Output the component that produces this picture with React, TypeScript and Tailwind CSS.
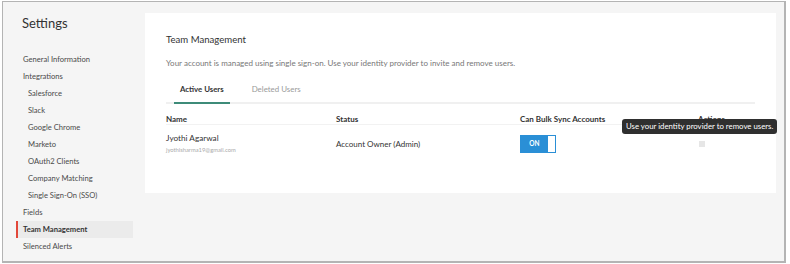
const menu: { label: string; sub?: boolean; active?: boolean }[] = [
  { label: "General Information" },
  { label: "Integrations" },
  { label: "Salesforce", sub: true },
  { label: "Slack", sub: true },
  { label: "Google Chrome", sub: true },
  { label: "Marketo", sub: true },
  { label: "OAuth2 Clients", sub: true },
  { label: "Company Matching", sub: true },
  { label: "Single Sign-On (SSO)", sub: true },
  { label: "Fields" },
  { label: "Team Management", active: true },
  { label: "Silenced Alerts" },
];

function Sidebar() {
  return (
    <div className="w-[142px] shrink-0 pl-[13px] pt-[13px]">
      <div className="ml-[6px] h-[16px] text-[13px] leading-[16px] text-[#333]">Settings</div>
      <div className="mt-[20px] flex flex-col">
        {menu.map((item) => (
          <div
            key={item.label}
            className={
              "flex h-[17px] w-[117px] items-center border-l-2 text-[7.6px] " +
              (item.sub ? "pl-[10px] " : "pl-[5px] ") +
              (item.active
                ? "border-[#e2483a] bg-[#ebebeb] font-bold text-[#333]"
                : "border-transparent text-[#4a4a4a]")
            }
          >
            {item.label}
          </div>
        ))}
      </div>
    </div>
  );
}

function Toggle() {
  return (
    <div className="flex h-[18px] w-[36px] border border-[#2a8fd6] bg-white">
      <div className="flex w-[27px] items-center justify-center bg-[#2a8fd6] text-[6.5px] font-bold text-white">
        ON
      </div>
    </div>
  );
}

function TeamCard() {
  return (
    <div className="relative mt-[11px] h-[180px] w-[631px] bg-white pl-[21px] pr-[21px] pt-[20px]">
      <div className="h-[14px] text-[9.6px] leading-[14px] text-[#333]">Team Management</div>
      <div className="mt-[11px] h-[10px] text-[8px] leading-[10px] text-[#777]">
        Your account is managed using single sign-on. Use your identity provider to invite and remove users.
      </div>

      <div className="mt-[16px] flex gap-[16px] border-b-2 border-[#f0f0f0] pl-[8px]">
        <div className="-mb-[2px] border-b-2 border-[#3e8b79] px-[6px] pb-[8px] text-[7.8px] font-bold leading-[10px] text-[#333]">
          Active Users
        </div>
        <div className="px-[6px] pb-[8px] text-[7.9px] leading-[10px] text-[#9a9a9a]">Deleted Users</div>
      </div>

      <div className="mt-[10px] grid grid-cols-[170px_184px_178px_1fr] border-b border-[#f2f2f2] text-[8px] font-bold leading-[10px] text-[#333]">
        <div>Name</div>
        <div>Status</div>
        <div>Can Bulk Sync Accounts</div>
        <div>Actions</div>
      </div>

      <div className="grid grid-cols-[170px_184px_178px_1fr] items-center pt-[8px]">
        <div className="flex flex-col">
          <div className="text-[8.2px] leading-[11px] text-[#333]">Jyothi Agarwal</div>
          <div className="mt-[2px] text-[5.8px] leading-[8px] text-[#aaa]">jyothisharma19@gmail.com</div>
        </div>
        <div className="text-[8px] leading-[10px] text-[#333]">Account Owner (Admin)</div>
        <div>
          <Toggle />
        </div>
        <div className="pl-[1px]">
          <div className="h-[6px] w-[6px] bg-[#e6e6e6]" />
        </div>
      </div>

      <div className="absolute left-[477px] top-[106px] flex h-[15px] items-center whitespace-nowrap rounded-[3px] bg-[#2f2f2f] px-[4px] text-[7.8px] text-white">
        Use your identity provider to remove users.
      </div>
    </div>
  );
}

export default function App() {
  return (
    <div className="h-[264px] w-[790px] bg-white pl-[2px] pt-px" style={{ fontFamily: "Lato, 'Liberation Sans', sans-serif" }}>
      <div className="flex h-[262px] w-[784px] border-b-2 border-l border-r-2 border-t border-[#b4b4b4] bg-[#f5f5f5]">
        <Sidebar />
        <TeamCard />
      </div>
    </div>
  );
}
